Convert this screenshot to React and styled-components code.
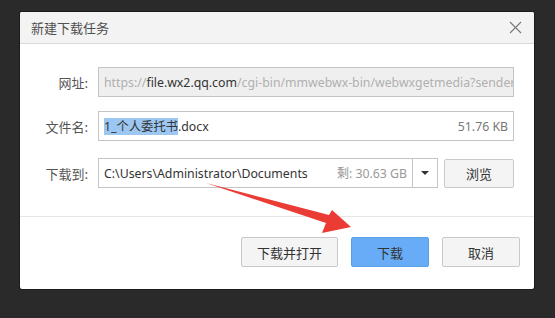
import React from "react";
import styled, { createGlobalStyle } from "styled-components";

const GlobalStyle = createGlobalStyle`
    html, body {
        margin: 0;
        padding: 0;
        background: #2a2a2a;
        font-family: "Noto Sans", "Noto Sans CJK SC", sans-serif;
    }
    #root {
        width: 555px;
        height: 318px;
        overflow: hidden;
    }
`;

const Page = styled.div`
    position: relative;
    width: 555px;
    height: 318px;
    padding: 12px 0 0 20px;
    box-sizing: border-box;
`;

const Dialog = styled.div`
    width: 514px;
    height: 277px;
    background: #fff;
    border-radius: 2px;
    box-shadow: 0 0 0 1px rgba(0, 0, 0, 0.35);
    display: flex;
    flex-direction: column;
    overflow: hidden;
`;

const TitleBar = styled.div`
    height: 31px;
    flex: none;
    background: #f3f3f3;
    border-bottom: 1px solid #d9d9d9;
    display: flex;
    align-items: center;
    justify-content: space-between;
    padding: 0 12px 0 11px;
    h1 {
        margin: 0;
        font-weight: normal;
        font-size: 13px;
        color: #505050;
        font-family: "Noto Sans CJK SC", sans-serif;
    }
`;

const CloseIcon = styled.svg`
    width: 13px;
    height: 13px;
    display: block;
`;

const Form = styled.div`
    padding: 23px 0 28px;
    border-bottom: 1px solid #e6e6e6;
`;

const Row = styled.div`
    display: flex;
    align-items: center;
    margin-top: ${(p) => p.$top || 0}px;
`;

const Label = styled.div`
    width: 68px;
    margin-right: 10px;
    text-align: right;
    font-size: 13px;
    color: #555;
    font-family: "Noto Sans CJK SC", sans-serif;
`;

const Field = styled.div`
    width: ${(p) => p.$width}px;
    height: 30px;
    box-sizing: border-box;
    border: 1px solid #c4c4c4;
    background: ${(p) => (p.$disabled ? "#efefef" : "#fff")};
    display: flex;
    align-items: center;
    padding: 0 5px;
    font-size: 12.3px;
    color: #333;
    white-space: nowrap;
    overflow: hidden;
`;

const Muted = styled.span`
    color: ${(p) => p.$color || "#b0b0b0"};
`;

const Selected = styled.span`
    background: #9cc7f2;
    color: #333;
`;

const Grow = styled.span`
    flex: 1;
    overflow: hidden;
`;

const Dropdown = styled.div`
    width: 25px;
    height: 30px;
    box-sizing: border-box;
    border: 1px solid #c4c4c4;
    border-left: none;
    display: flex;
    align-items: center;
    justify-content: center;
    &::after {
        content: "";
        border-left: 4px solid transparent;
        border-right: 4px solid transparent;
        border-top: 4px solid #333;
    }
`;

const Button = styled.button`
    width: ${(p) => p.$width}px;
    height: ${(p) => p.$height || 30}px;
    box-sizing: border-box;
    border: 1px solid ${(p) => (p.$primary ? "#5b9ee8" : "#c9c9c9")};
    background: ${(p) => (p.$primary ? "#68acf7" : "#f4f4f4")};
    border-radius: 2px;
    font-size: 13px;
    color: #333;
    font-family: "Noto Sans CJK SC", sans-serif;
    padding: 0;
    cursor: pointer;
    margin-left: ${(p) => p.$gap || 0}px;
`;

const Footer = styled.div`
    flex: 1;
    display: flex;
    justify-content: flex-end;
    align-items: flex-start;
    padding: 20px 14px 0 0;
`;

const Arrow = styled.svg`
    position: absolute;
    left: 0;
    top: 0;
    pointer-events: none;
`;

export default function App() {
    return (
        <Page>
            <GlobalStyle />
            <Dialog>
                <TitleBar>
                    <h1>新建下载任务</h1>
                    <CloseIcon viewBox="0 0 13 13">
                        <path d="M1 1 L12 12 M12 1 L1 12" stroke="#777" strokeWidth="1.1" />
                    </CloseIcon>
                </TitleBar>
                <Form>
                    <Row>
                        <Label>网址:</Label>
                        <Field $width={416} $disabled>
                            <Muted>https://</Muted>
                            <span>file.wx2.qq.com</span>
                            <Muted>/cgi-bin/mmwebwx-bin/webwxgetmedia?sender</Muted>
                        </Field>
                    </Row>
                    <Row $top={14}>
                        <Label>文件名:</Label>
                        <Field $width={416}>
                            <Grow>
                                <Selected>1_个人委托书</Selected>.docx
                            </Grow>
                            <Muted $color="#777">51.76 KB</Muted>
                        </Field>
                    </Row>
                    <Row $top={17}>
                        <Label>下载到:</Label>
                        <Field $width={315}>
                            <Grow>C:\Users\Administrator\Documents</Grow>
                            <Muted $color="#999">剩: 30.63 GB</Muted>
                        </Field>
                        <Dropdown />
                        <Button $width={70} $height={29} $gap={6}>
                            浏览
                        </Button>
                    </Row>
                </Form>
                <Footer>
                    <Button $width={97}>下载并打开</Button>
                    <Button $width={78} $gap={13} $primary>
                        下载
                    </Button>
                    <Button $width={78} $gap={13}>
                        取消
                    </Button>
                </Footer>
            </Dialog>
            <Arrow width="555" height="318" viewBox="0 0 555 318">
                <polygon
                    points="206,183 329,215 332,210 351,227 322,233 326,223"
                    fill="#eb3b35"
                />
            </Arrow>
        </Page>
    );
}
